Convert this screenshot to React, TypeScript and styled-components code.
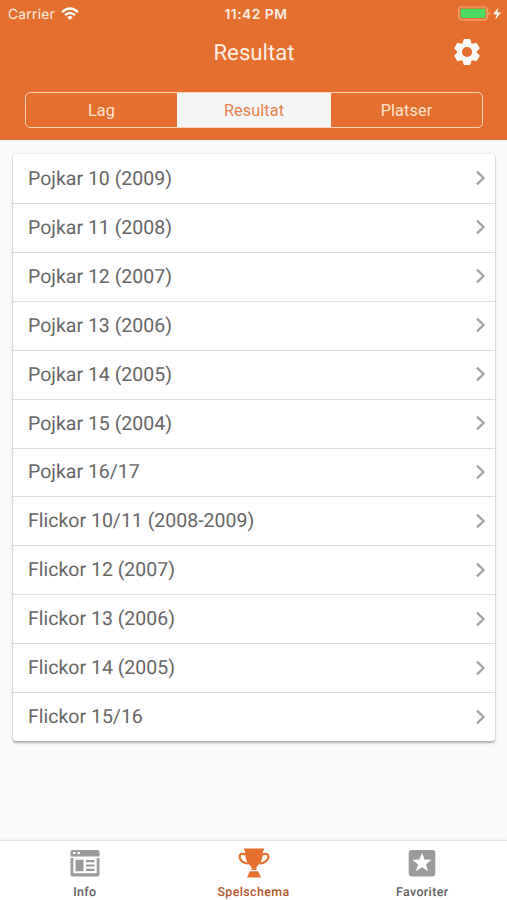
import React from "react";
import styled, { createGlobalStyle } from "styled-components";

const ORANGE = "#e46f2e";

const GlobalStyle = createGlobalStyle`
  * { box-sizing: border-box; }
  body {
    margin: 0;
    background: #fafafa;
    font-family: Roboto, "Liberation Sans", sans-serif;
    text-rendering: geometricPrecision;
  }
`;

const Screen = styled.div`
  height: 100vh;
  display: flex;
  flex-direction: column;
  background: #fafafa;
  overflow: hidden;
`;

const Header = styled.header`
  flex: none;
  height: 140px;
  background: ${ORANGE};
  color: #fdeee5;
`;

const StatusBar = styled.div`
  height: 28px;
  padding: 0 5px 0 8px;
  display: grid;
  grid-template-columns: 1fr auto 1fr;
  align-items: center;
  font-family: Inter, sans-serif;
`;

const Carrier = styled.div`
  display: flex;
  align-items: center;
  gap: 6px;
  padding-top: 1px;
  font-size: 13.8px;
  letter-spacing: 0.25px;
  svg {
    margin-top: -2px;
  }
`;

const Clock = styled.div`
  padding: 1px 0 0 2px;
  font-size: 13.8px;
  font-weight: 600;
  letter-spacing: 0.5px;
`;

const Battery = styled.div`
  display: flex;
  justify-content: flex-end;
`;

const TitleBar = styled.div`
  height: 48px;
  padding: 0 26px;
  display: grid;
  grid-template-columns: 1fr auto 1fr;
  align-items: center;
`;

const Title = styled.h1`
  grid-column: 2;
  margin: 0;
  padding: 2px 0 0 1px;
  font-size: 22.2px;
  line-height: 28px;
  font-weight: 400;
`;

const IconButton = styled.button`
  justify-self: end;
  display: flex;
  padding: 0;
  border: 0;
  background: none;
`;

const Segments = styled.div`
  margin: 16px 24px 0 25px;
  height: 36px;
  display: grid;
  grid-template-columns: 151px 154px 1fr;
  border: 1.5px solid #fbd3ba;
  border-radius: 5px;
  overflow: hidden;
`;

const Segment = styled.button<{ $active?: boolean }>`
  border: 0;
  padding: 1px 0 0;
  font: 400 16.2px Roboto, sans-serif;
  letter-spacing: 0.13px;
  color: ${(p) => (p.$active ? "#e78049" : "#fde2d2")};
  background: ${(p) => (p.$active ? "#f4f6f6" : "transparent")};
`;

const Content = styled.main`
  flex: 1;
  padding: 14px 12px 0 13px;
`;

const Card = styled.ul`
  margin: 0;
  padding: 0;
  list-style: none;
  height: 587px;
  display: grid;
  grid-template-rows: 49px repeat(11, 1fr);
  background: #fff;
  border-radius: 3px;
  box-shadow: 0 2px 2px rgba(0, 0, 0, 0.25), 0 0 2px rgba(0, 0, 0, 0.16),
    0 2px 5px rgba(0, 0, 0, 0.06);
`;

const Row = styled.li`
  display: flex;
  align-items: center;
  justify-content: space-between;
  padding: 0 9px 1px 15px;
  font-size: 19.5px;
  color: #666;
  & + & {
    border-top: 1px solid #dcdcdc;
  }
`;

const TabBar = styled.nav`
  flex: none;
  height: 60px;
  display: grid;
  grid-template-columns: repeat(3, 168.7px);
  background: #fff;
  border-top: 1px solid #e2e2e2;
  box-shadow: 0 -1px 2px rgba(0, 0, 0, 0.04);
`;

const Tab = styled.a<{ $active?: boolean }>`
  display: flex;
  flex-direction: column;
  align-items: center;
  padding: 6px 0 0 1px;
  gap: 6px;
  font: 500 12.4px/16px Roboto, sans-serif;
  letter-spacing: 0.4px;
  color: ${(p) => (p.$active ? "#b4562a" : "#606060")};
  svg {
    color: ${(p) => (p.$active ? ORANGE : "#9b9b9b")};
  }
`;

const WifiIcon = () => (
  <svg width="18" height="14" viewBox="0 0 18 14" fill="none" stroke="#fff" strokeWidth="2.3">
    <path d="M1 5.2Q9-2.2 17 5.2M4 8.2Q9 3.8 14 8.2" />
    <path d="M6.2 10.2Q9 8 11.8 10.2L9 13Z" fill="#fff" stroke="none" />
  </svg>
);

const BatteryIcon = () => (
  <svg width="44" height="16" viewBox="0 0 44 16">
    <rect x=".7" y="1" width="28.6" height="12.8" rx="3" fill="none" stroke="#f5a878" strokeWidth="1.2" />
    <rect x="2.5" y="2.700" width="25" height="9.4" rx="1.3" fill="#4cda62" />
    <path d="M30.7 5.200v4.4q1.3-.6 1.3-2.2t-1.3-2.2z" fill="#f5a878" />
    <path d="M40.3 1.400L35.3 8.200h3.400l-1.400 5.600L43 6.500h-3.800z" fill="#fff" />
  </svg>
);

const GearIcon = () => (
  <svg width="28" height="28" viewBox="-14 -14 28 28" fill="#fafafa">
    <circle r="9.8" />
    {[0, 60, 120].map((a) => (
      <path
        key={a}
        transform={`rotate(${a})`}
        d="M-2.4-13H2.4Q3.5-13 3.7-11.8L4.5-8V8L3.7 11.8Q3.5 13 2.4 13H-2.4Q-3.5 13-3.7 11.8L-4.5 8V-8L-3.7-11.8Q-3.5-13-2.4-13Z"
      />
    ))}
    <circle r="5.1" fill={ORANGE} />
  </svg>
);

const ChevronIcon = () => (
  <svg width="11" height="16" viewBox="0 0 11 16" fill="none" stroke="#a3a3a3" strokeWidth="2.3">
    <path d="M2 1.7L8.5 8L2 14.3" />
  </svg>
);

const InfoIcon = () => (
  <svg width="30" height="32" viewBox="0 0 30 32" fill="currentColor">
    <path
      fillRule="evenodd"
      d="M2.5 3h25Q29.5 3 29.5 5v4.5H.5V5Q.5 3 2.5 3zM3 5v2h2.5V5zm4.5 0v2H10V5z"
    />
    <path
      fillRule="evenodd"
      d="M.5 11h29v16.500q0 2-2 2h-25q-2 0-2-2zM3.300 11v15.200h23.400V11z"
    />
    <path d="M5.500 12.800h8v11.400h-8zM16 13h8.500v2.200H16zm0 4.400h8.500v2.200H16zm0 4.400h8.500V24H16z" />
  </svg>
);

const TrophyIcon = () => (
  <svg width="32" height="32" viewBox="0 0 32 32">
    <g fill="none" stroke="currentColor" strokeWidth="2.2">
      <path d="M7.500 7.500C3 5.700 1.200 7.800 1.600 10.200C2.100 13.600 6 16.500 10 16.500" />
      <path d="M24.500 7.500C29 5.700 30.800 7.800 30.400 10.200C29.900 13.600 26 16.500 22 16.500" />
    </g>
    <path
      fill="currentColor"
      d="M6 1.500h20v2h-1C25 11.500 23 16 20 18.500C18.300 20 18 21.500 18.700 23h-5.400C14 21.500 13.700 20 12 18.500C9 16 7 11.500 7 3.500H6zM11.800 24.200h8.400l2.800 6.300H9z"
    />
  </svg>
);

const StarIcon = () => (
  <svg width="28" height="32" viewBox="0 0 28 32">
    <rect x=".7" y="3" width="26.600" height="26.500" rx="3" fill="currentColor" />
    <path
      fill="#fff"
      d="M14 5.800l2.500 6.700 7.200.3-5.700 4.500 2 6.900-6-4-6 4 2-6.900-5.700-4.500 7.200-.3z"
    />
  </svg>
);

const groups = [
  "Pojkar 10 (2009)",
  "Pojkar 11 (2008)",
  "Pojkar 12 (2007)",
  "Pojkar 13 (2006)",
  "Pojkar 14 (2005)",
  "Pojkar 15 (2004)",
  "Pojkar 16/17",
  "Flickor 10/11 (2008-2009)",
  "Flickor 12 (2007)",
  "Flickor 13 (2006)",
  "Flickor 14 (2005)",
  "Flickor 15/16",
];

export default function App() {
  return (
    <Screen>
      <GlobalStyle />
      <Header>
        <StatusBar>
          <Carrier>
            Carrier <WifiIcon />
          </Carrier>
          <Clock>11:42 PM</Clock>
          <Battery>
            <BatteryIcon />
          </Battery>
        </StatusBar>
        <TitleBar>
          <Title>Resultat</Title>
          <IconButton aria-label="Inställningar">
            <GearIcon />
          </IconButton>
        </TitleBar>
        <Segments>
          <Segment>Lag</Segment>
          <Segment $active>Resultat</Segment>
          <Segment>Platser</Segment>
        </Segments>
      </Header>
      <Content>
        <Card>
          {groups.map((name) => (
            <Row key={name}>
              {name}
              <ChevronIcon />
            </Row>
          ))}
        </Card>
      </Content>
      <TabBar>
        <Tab>
          <InfoIcon />
          Info
        </Tab>
        <Tab $active>
          <TrophyIcon />
          Spelschema
        </Tab>
        <Tab>
          <StarIcon />
          Favoriter
        </Tab>
      </TabBar>
    </Screen>
  );
}
